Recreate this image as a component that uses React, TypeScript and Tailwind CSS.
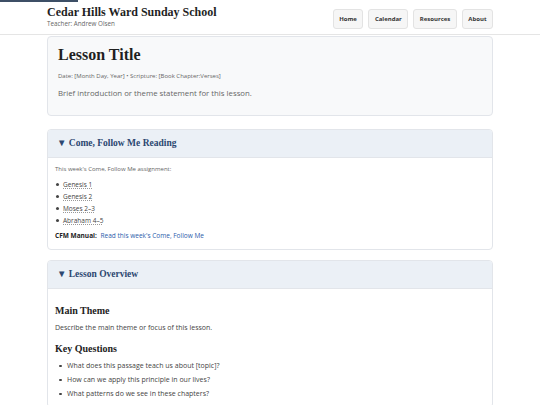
const serif = { fontFamily: 'Georgia, "Liberation Serif", serif' };

const readings = ['Genesis 1', 'Genesis 2', 'Moses 2–3', 'Abraham 4–5'];
const questions = [
  'What does this passage teach us about [topic]?',
  'How can we apply this principle in our lives?',
  'What patterns do we see in these chapters?',
];

function NavButton({ label }: { label: string }) {
  return (
    <a className="rounded-[3px] border border-[#e3e3e3] bg-[#f6f6f6] px-[5.5px] py-[5px] text-[6px] font-bold leading-[8px] text-[#333]">
      {label}
    </a>
  );
}

function Section({ title, children }: { title: string; children: React.ReactNode }) {
  return (
    <section className="overflow-hidden rounded-[4px] border border-[#e2e5ea] bg-white">
      <div className="flex h-[28px] items-center border-b border-[#e2e5ea] bg-[#ebf0f6] px-[9px]">
        <h2 className="text-[9.5px] font-bold text-[#2c4770]" style={serif}>
          ▼ {title}
        </h2>
      </div>
      <div className="px-[7px]">{children}</div>
    </section>
  );
}

function Bullet({ children, indent, gap }: { children: React.ReactNode; indent: string; gap: string }) {
  return (
    <li className={`flex items-center ${indent}`}>
      <span className={`h-[2.5px] w-[2.5px] shrink-0 rounded-full bg-[#444] ${gap}`} />
      {children}
    </li>
  );
}

export default function App() {
  return (
    <div
      className="min-h-[405px] bg-white text-[#333]"
      style={{ fontFamily: '"Open Sans", "Noto Sans", sans-serif' }}
    >
      {/* reading progress */}
      <div className="h-[2px] w-[78px] bg-[#3d4f66]" />

      <header className="border-b border-[#e5e5e5]">
        <div className="mx-auto flex h-[32px] max-w-[446px] items-start justify-between">
          <div className="pt-[3px]">
            <h1 className="text-[12px] font-bold leading-[15px] text-[#1f1f1f]" style={serif}>
              Cedar Hills Ward Sunday School
            </h1>
            <p className="text-[6.3px] leading-[8px] text-[#666]">Teacher: Andrew Olsen</p>
          </div>
          <nav className="flex gap-[5px] pt-[7px]">
            <NavButton label="Home" />
            <NavButton label="Calendar" />
            <NavButton label="Resources" />
            <NavButton label="About" />
          </nav>
        </div>
      </header>

      <main className="mx-auto max-w-[446px]">
        {/* Lesson header */}
        <div className="mt-[1px] rounded-[4px] border border-[#e2e5ea] bg-[#f8f9fa] px-[10px] pb-[16px] pt-[7px]">
          <h1 className="text-[16px] font-bold leading-[22px] text-[#1f1f1f]" style={serif}>
            Lesson Title
          </h1>
          <p className="mt-[6px] text-[6px] leading-[9px] text-[#666]">
            Date: [Month Day, Year] • Scripture: [Book Chapter:Verses]
          </p>
          <p className="mt-[7px] text-[7.8px] leading-[11px] text-[#666]">
            Brief introduction or theme statement for this lesson.
          </p>
        </div>

        <div className="mt-[13px]">
          <Section title="Come, Follow Me Reading">
            <p className="mt-[7px] text-[6px] leading-[9px] text-[#666]">
              This week's Come, Follow Me assignment:
            </p>
            <ul className="mt-[6px] space-y-[3px]">
              {readings.map((r) => (
                <Bullet key={r} indent="pl-[1px]" gap="mr-[4.5px]">
                  <a className="text-[6.5px] leading-[9px] text-[#444] underline decoration-[#999] decoration-dotted underline-offset-1">
                    {r}
                  </a>
                </Bullet>
              ))}
            </ul>
            <p className="mb-[9px] mt-[6px] text-[6.5px] leading-[9px]">
              <strong className="text-[#222]">CFM Manual:</strong>{' '}
              <a className="ml-[2px] text-[#2a5caa]">Read this week's Come, Follow Me</a>
            </p>
          </Section>
        </div>

        <div className="mt-[10px]">
          <Section title="Lesson Overview">
            <h3 className="mt-[15px] text-[10px] font-bold leading-[14px] text-[#222]" style={serif}>
              Main Theme
            </h3>
            <p className="mt-[5px] text-[7px] leading-[10px] text-[#444]">
              Describe the main theme or focus of this lesson.
            </p>
            <h3 className="mt-[9px] text-[10px] font-bold leading-[14px] text-[#222]" style={serif}>
              Key Questions
            </h3>
            <ul className="mt-[5px] space-y-[4px] pb-[8px]">
              {questions.map((q) => (
                <Bullet key={q} indent="pl-[4px]" gap="mr-[5.5px]">
                  <span className="text-[7px] leading-[10px] text-[#444]">{q}</span>
                </Bullet>
              ))}
            </ul>
          </Section>
        </div>
      </main>
    </div>
  );
}
